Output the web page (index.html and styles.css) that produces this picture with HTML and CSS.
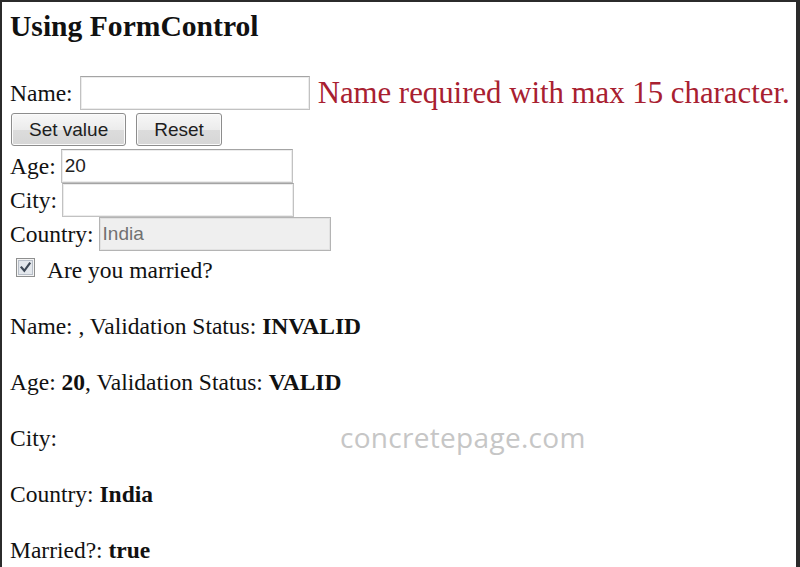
FILE: index.html
```html
<!DOCTYPE html>
<html lang="en">
<head>
<meta charset="utf-8">
<title>Using FormControl</title>
<link rel="stylesheet" href="styles.css">
</head>
<body>
<div class="frame">
  <h3 class="title">Using FormControl</h3>
  <form class="form">
    <div class="row">
      <label class="label" for="name">Name:</label>
      <input class="field" id="name" type="text">
      <span class="error">Name required with max 15 character.</span>
    </div>
    <div class="row buttons">
      <button class="btn" type="button">Set value</button>
      <button class="btn" type="button">Reset</button>
    </div>
    <div class="row">
      <label class="label" for="age">Age:</label>
      <input class="field" id="age" type="text" value="20">
    </div>
    <div class="row">
      <label class="label" for="city">City:</label>
      <input class="field" id="city" type="text">
    </div>
    <div class="row">
      <label class="label" for="country">Country:</label>
      <input class="field" id="country" type="text" value="India" disabled>
    </div>
    <div class="row check">
      <span class="checkbox" role="checkbox" aria-checked="true">
        <svg width="19" height="19" viewBox="0 0 19 19">
          <rect x="0.5" y="0.5" width="18" height="18" fill="#f4f4f4" stroke="#8e8f8f"/>
          <rect x="2.5" y="2.5" width="14" height="14" fill="#e3e7ec" stroke="#b7bec8"/>
          <path d="M5.5 9.5 L8.3 12.8 L13.6 5.6" fill="none" stroke="#3d4856" stroke-width="2.2" stroke-linecap="square"/>
        </svg>
      </span>
      <span class="label">Are you married?</span>
    </div>
  </form>
  <div class="output">
    <p>Name: , Validation Status: <b>INVALID</b></p>
    <p>Age: <b>20</b>, Validation Status: <b>VALID</b></p>
    <p>City: </p>
    <p>Country: <b>India</b></p>
    <p>Married?: <b>true</b></p>
  </div>
  <div class="watermark">concretepage.com</div>
</div>
</body>
</html>
```

FILE: styles.css
```css
html, body {
  margin: 0;
  padding: 0;
  background: #ffffff;
  overflow: hidden;
}

.frame {
  position: relative;
  box-sizing: border-box;
  width: 800px;
  height: 567px;
  overflow: hidden;
  border-top: 2px solid #2b2b2b;
  border-left: 2px solid #2b2b2b;
  border-right: 4px solid #2b2b2b;
  padding-left: 8px;
  font-family: "Liberation Serif", "Times New Roman", serif;
  font-size: 23.5px;
  color: #111111;
  background: #ffffff;
}

.title {
  margin: 8px 0 34px;
  font-size: 29.6px;
  line-height: 32px;
  font-weight: bold;
}

.form {
  display: flex;
  flex-direction: column;
}

.row {
  display: flex;
  align-items: center;
  gap: 5px;
  height: 34px;
}

.label {
  line-height: 26px;
}

.field {
  box-sizing: border-box;
  width: 232px;
  height: 34px;
  margin: 0;
  padding: 0 3px;
  border: 1px solid #c2c2c2;
  border-top-color: #a4a4a4;
  box-shadow: inset 0 0 0 1px #ececec;
  border-radius: 0;
  background: #ffffff;
  font-family: "Liberation Sans", Arial, sans-serif;
  font-size: 19px;
  color: #222222;
  outline: none;
}

#name {
  width: 230px;
  margin-left: 2px;
}

.field:disabled {
  background: #efefef;
  color: #717171;
  border-color: #b4b4b4;
  box-shadow: inset 0 0 0 1px #e2e2e2;
}

.error {
  margin-left: 3px;
  font-size: 30.8px;
  line-height: 34px;
  color: #a82030;
}

.buttons {
  height: 39px;
  gap: 10px;
  align-items: flex-start;
  padding-top: 3px;
  box-sizing: border-box;
  padding-left: 1px;
}

.btn {
  box-sizing: border-box;
  height: 33px;
  margin: 0;
  padding: 0 17px;
  border: 1px solid #8d8d8d;
  border-radius: 3px;
  background: linear-gradient(#f7f7f7 0%, #ececec 50%, #dcdcdc 51%, #d6d6d6 100%);
  box-shadow: inset 0 0 0 1px #fbfbfb;
  font-family: "Liberation Sans", Arial, sans-serif;
  font-size: 19px;
  color: #1e1e1e;
}

.check {
  height: auto;
  align-items: flex-start;
  gap: 12px;
  padding: 6px 0 2px 6px;
}

.checkbox {
  display: block;
  width: 19px;
  height: 19px;
  margin-top: 1px;
}

.checkbox svg {
  display: block;
}

.output p {
  margin: 26px 0;
  line-height: 30px;
}

.watermark {
  position: absolute;
  left: 338px;
  top: 416px;
  font-family: "Open Sans", "DejaVu Sans", sans-serif;
  font-size: 28px;
  line-height: 38px;
  color: #c6c6c6;
  letter-spacing: 0.3px;
}
```
